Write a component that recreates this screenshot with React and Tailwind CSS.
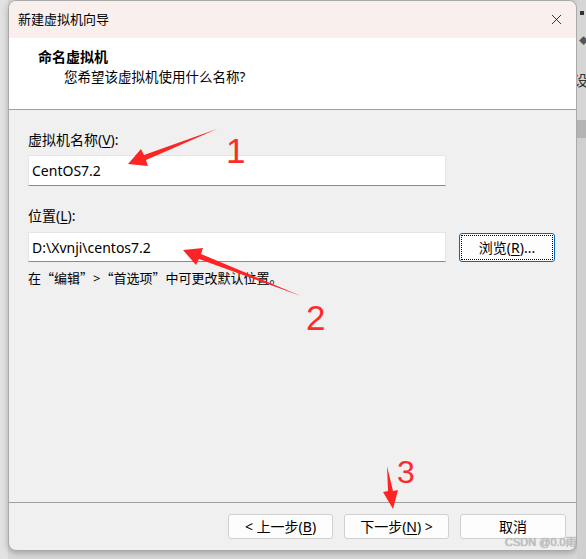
import { X } from "lucide-react";

const font = { fontFamily: '"Noto Sans", "Noto Sans CJK SC", sans-serif' };
const cjk = { fontFamily: '"Noto Sans CJK SC", sans-serif' };

function U({ children }) {
  return <span className="underline underline-offset-2 decoration-1">{children}</span>;
}

function Arrows() {
  return (
    <svg className="absolute inset-0 pointer-events-none" width="586" height="559" viewBox="0 0 586 559">
      <polygon
        fill="#fe2424"
        points="128,164 141,149 144,155 217,129 146,160 148,166"
      />
      <polygon
        fill="#fe2424"
        points="183,250 203,248 201,254 301,296 199,259 196,265"
      />
      <polygon
        fill="#fe2424"
        points="393,509 383,492 388,491 387,466 393,491 398,490"
      />
    </svg>
  );
}

function Num({ children, className }) {
  return (
    <div
      className={`absolute leading-none text-[#fe2a2a] ${className}`}
      style={{ fontFamily: '"Liberation Sans", sans-serif' }}
    >
      {children}
    </div>
  );
}

export default function App() {
  return (
    <div className="relative w-[586px] h-[559px] overflow-hidden bg-[#d8d8d8] flex text-[14px] text-black" style={font}>
      {/* left strip */}
      <div className="w-[8px] h-full bg-[#e2e2e2]" />

      {/* window */}
      <div className="w-[569px] h-[551px] flex flex-col rounded-lg border border-[#a9a9a9] bg-[#f0f0f0] overflow-hidden shadow-[0_2px_6px_rgba(0,0,0,0.25)]">
        {/* title bar */}
        <div className="h-[37px] shrink-0 bg-[#f9efed] flex items-center justify-between pl-[9px] pr-[11px]">
          <span className="text-[13px]">新建虚拟机向导</span>
          <X size={17} strokeWidth={1.1} />
        </div>

        {/* header */}
        <div className="h-[72px] shrink-0 bg-white border-b border-[#a0a0a0] pt-[9px]">
          <div className="pl-[29px] font-bold text-[14px] leading-[20px]">命名虚拟机</div>
          <div className="pl-[55px] text-[13.5px] leading-[20px]">您希望该虚拟机使用什么名称?</div>
        </div>

        {/* body */}
        <div className="flex-1 border-b border-[#a0a0a0] pt-[21px] pl-[19px]">
          <div className="leading-[18px]">
            虚拟机名称(<U>V</U>):
          </div>
          <div className="mt-[6px] w-[418px] h-[31px] bg-white border border-[#e6e6e6] border-b-[#8a8a8a] flex items-center pl-[3px]">
            CentOS7.2
          </div>

          <div className="mt-[21px] leading-[18px]">
            位置(<U>L</U>):
          </div>
          <div className="mt-[7px] flex items-center gap-[13px]">
            <div className="w-[418px] h-[30px] bg-white border border-[#e6e6e6] border-b-[#8a8a8a] flex items-center pl-[3px]">
              D:\Xvnji\centos7.2
            </div>
            <div className="w-[96px] h-[29px] rounded-[3px] border border-[#0067c0] bg-[#fdfdfd] p-[1px]">
              <div className="w-full h-full border border-dotted border-black flex items-center justify-center">
                浏览(<U>R</U>)...
              </div>
            </div>
          </div>

          <div className="mt-[7px] leading-[18px] text-[13px]" style={cjk}>
            在“编辑”<span style={font}>&gt;</span>“首选项”中可更改默认位置。
          </div>
        </div>

        {/* footer */}
        <div className="h-[47px] shrink-0 flex justify-end items-start gap-[11px] pt-[11px] pr-[10px]">
          <button className="w-[105px] h-[25px] rounded-[3px] border border-[#d0d0d0] bg-[#fdfdfd] leading-none">
            &lt; 上一步(<U>B</U>)
          </button>
          <button className="w-[105px] h-[25px] rounded-[3px] border border-[#d0d0d0] bg-[#fdfdfd] leading-none">
            下一步(<U>N</U>) &gt;
          </button>
          <button className="w-[106px] h-[25px] rounded-[3px] border border-[#d0d0d0] bg-[#fdfdfd] leading-none">
            取消
          </button>
        </div>
      </div>

      {/* right strip, background behind the dialog */}
      <div className="w-[9px] h-full flex flex-col overflow-hidden">
        <div className="h-[120px] bg-[#d6d6d6] relative">
          <div className="absolute left-[3px] top-[11px] w-[4px] h-[4px] bg-[#333]" />
          <div className="absolute left-[2px] top-[36px] text-[9px] leading-none text-[#555]">◆</div>
          <div className="absolute left-[-4px] top-[73px] text-[15px] leading-none text-[#333]">设</div>
        </div>
        <div className="h-[18px] bg-[#b4b4b4]" />
        <div className="flex-1 bg-[#d0d0d0]" />
      </div>

      <Arrows />
      <Num className="left-[226px] top-[133px] text-[35px]">1</Num>
      <Num className="left-[306px] top-[300px] text-[35px]">2</Num>
      <Num className="left-[397px] top-[456px] text-[32px]">3</Num>

      <div
        className="absolute left-[505px] top-[537px] text-[11px] leading-none text-[#c4c4c4]"
        style={{ fontFamily: '"Liberation Sans", "Noto Sans CJK SC", sans-serif', textShadow: "0 0 1px #888" }}
      >
        CSDN @0.0雨
      </div>
    </div>
  );
}
